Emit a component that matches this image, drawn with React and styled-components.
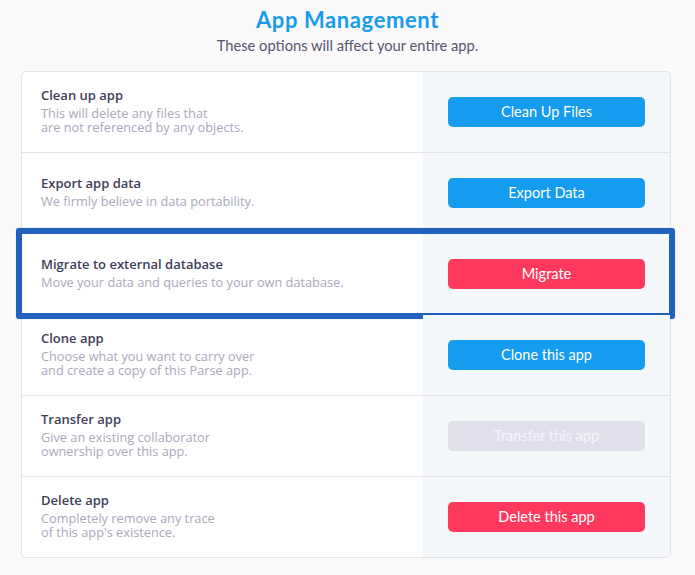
import React from "react";
import styled, { createGlobalStyle } from "styled-components";

const Global = createGlobalStyle`
  html, body { margin: 0; padding: 0; background: #fbf9fa; }
  body { font-family: "Open Sans", "Liberation Sans", sans-serif; }
`;

const Page = styled.div`
  width: 695px;
  min-height: 575px;
  box-sizing: border-box;
  padding-top: 6px;
  background: #fbf9fa;
`;

const Header = styled.header`
  display: flex;
  flex-direction: column;
  align-items: center;
  margin-bottom: 15px;
`;

const Title = styled.h1`
  margin: 0;
  font-family: Lato, "Liberation Sans", sans-serif;
  font-weight: 700;
  font-size: 22px;
  letter-spacing: 0.6px;
  line-height: 28px;
  color: #169cee;
`;

const Subtitle = styled.p`
  margin: 0;
  font-family: Lato, "Liberation Sans", sans-serif;
  font-size: 14.7px;
  line-height: 22px;
  color: #56566e;
`;

const Card = styled.section`
  margin-left: 21px;
  width: 650px;
  box-sizing: border-box;
  border: 1px solid #e3e3ea;
  border-radius: 5px;
  background: #fff;
`;

const Row = styled.div`
  position: relative;
  display: grid;
  grid-template-columns: 401px 1fr;
  height: 80px;
  border-bottom: ${(p) => (p.$last ? "none" : "1px solid #e3e3ea")};
`;

const Info = styled.div`
  display: flex;
  flex-direction: column;
  justify-content: center;
  padding-left: 19px;
  padding-bottom: 3px;
`;

const Label = styled.div`
  font-weight: 600;
  font-size: 13px;
  line-height: 17px;
  color: #3e3e58;
`;

const Desc = styled.div`
  margin-top: 2px;
  font-size: 12.75px;
  line-height: 14px;
  color: #a9a9bb;
  white-space: pre-line;
`;

const Action = styled.div`
  display: flex;
  align-items: center;
  padding-left: 25px;
  padding-bottom: 1px;
  background: #f5f8fa;
  border-radius: ${(p) => p.$radius || "0"};
`;

const Button = styled.button`
  width: 197px;
  height: 30px;
  border: none;
  border-radius: 5px;
  font-family: Lato, "Liberation Sans", sans-serif;
  font-size: 14.5px;
  color: ${(p) => (p.$kind === "disabled" ? "#f4f4f8" : "#fff")};
  background: ${(p) =>
    p.$kind === "danger" ? "#ff395e" : p.$kind === "disabled" ? "#e0e0ea" : "#169cee"};
  cursor: ${(p) => (p.$kind === "disabled" ? "default" : "pointer")};
`;

const Highlight = styled.div`
  position: absolute;
  left: -6px;
  right: -5px;
  top: -6px;
  bottom: -5px;
  border: 6px solid #2162bf;
  border-radius: 3px;
  box-shadow: 0 0 1px rgba(0, 0, 0, 0.45);
  pointer-events: none;
`;

const rows = [
  { label: "Clean up app", desc: "This will delete any files that\nare not referenced by any objects.", btn: "Clean Up Files", kind: "primary" },
  { label: "Export app data", desc: "We firmly believe in data portability.", btn: "Export Data", kind: "primary" },
  { label: "Migrate to external database", desc: "Move your data and queries to your own database.", btn: "Migrate", kind: "danger", highlight: true },
  { label: "Clone app", desc: "Choose what you want to carry over\nand create a copy of this Parse app.", btn: "Clone this app", kind: "primary" },
  { label: "Transfer app", desc: "Give an existing collaborator\nownership over this app.", btn: "Transfer this app", kind: "disabled" },
  { label: "Delete app", desc: "Completely remove any trace\nof this app's existence.", btn: "Delete this app", kind: "danger" },
];

export default function App() {
  return (
    <Page>
      <Global />
      <Header>
        <Title>App Management</Title>
        <Subtitle>These options will affect your entire app.</Subtitle>
      </Header>
      <Card>
        {rows.map((r, i) => (
          <Row key={r.label} $last={i === rows.length - 1}>
            <Info>
              <Label>{r.label}</Label>
              <Desc>{r.desc}</Desc>
            </Info>
            <Action $radius={i === 0 ? "0 5px 0 0" : i === rows.length - 1 ? "0 0 5px 0" : "0"}>
              <Button $kind={r.kind} disabled={r.kind === "disabled"}>{r.btn}</Button>
            </Action>
            {r.highlight && <Highlight />}
          </Row>
        ))}
      </Card>
    </Page>
  );
}
